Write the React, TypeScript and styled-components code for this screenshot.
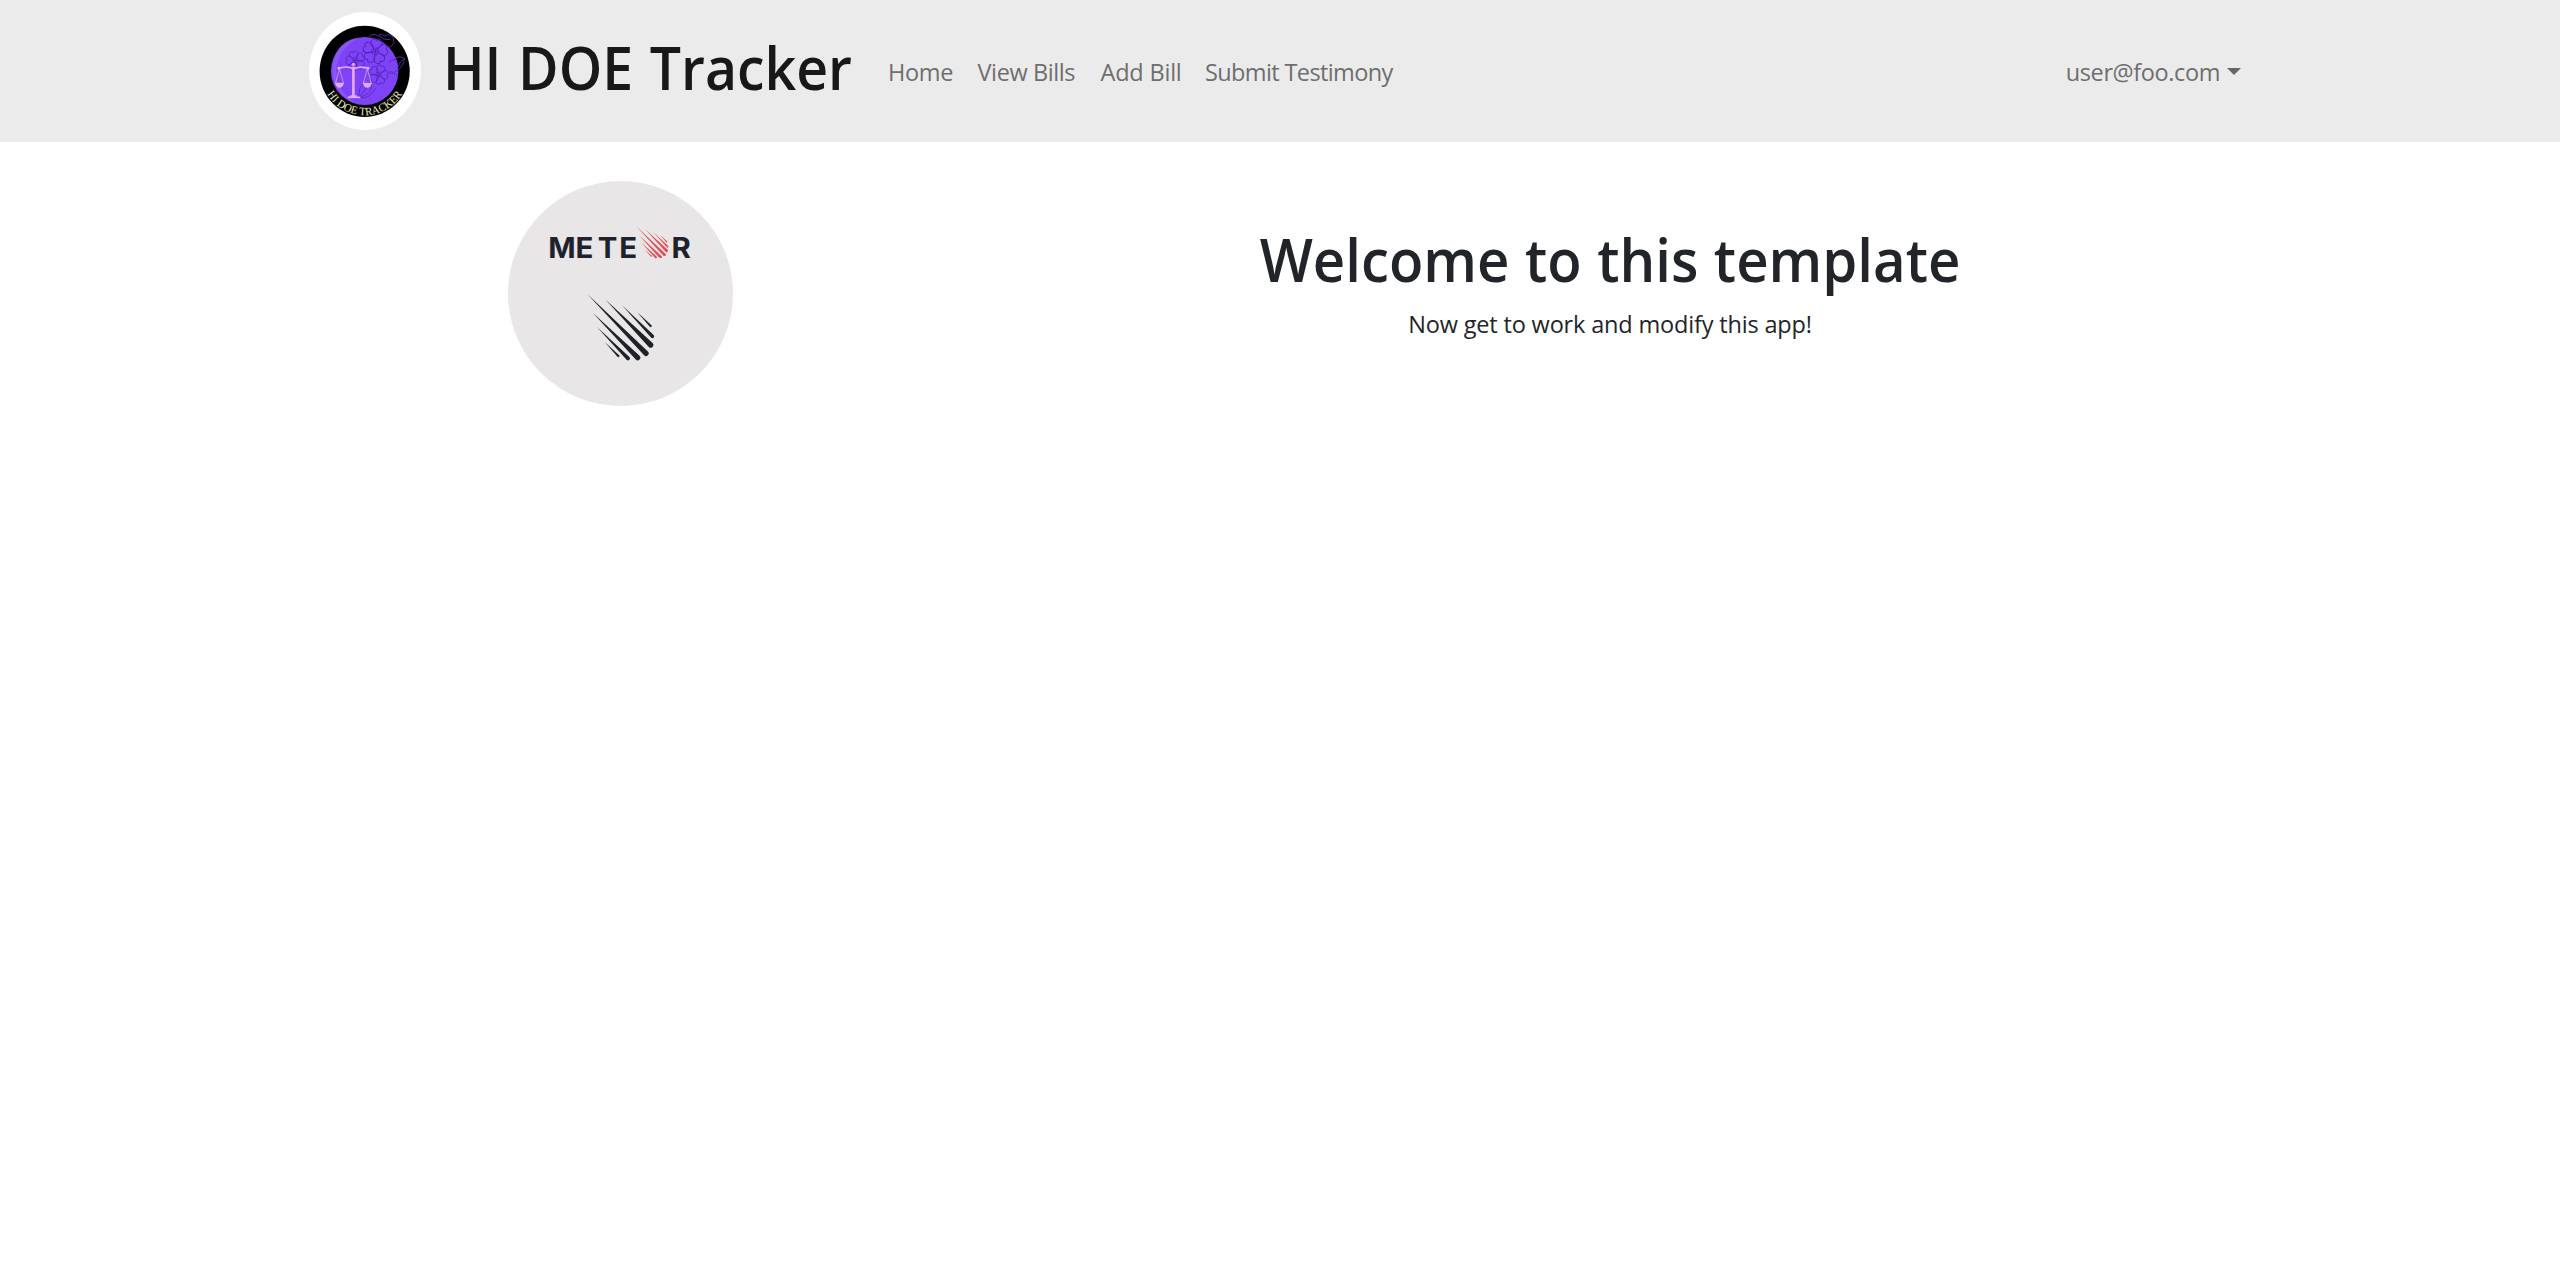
import React from "react";
import styled, { createGlobalStyle } from "styled-components";

const GlobalStyle = createGlobalStyle`
  * { box-sizing: border-box; }
  body {
    margin: 0;
    background: #fff;
    color: #212529;
    font-family: "Open Sans", "Noto Sans", sans-serif;
    font-size: 23.5px;
    line-height: 36px;
  }
`;

const NavBar = styled.header`
  height: 142px;
  background: #ebebeb;
`;

const Container = styled.div`
  width: 1980px;
  margin: 0 auto;
  padding: 0 18px;
`;

const NavInner = styled(Container)`
  height: 100%;
  display: flex;
  align-items: center;
`;

const Brand = styled.a`
  display: flex;
  align-items: center;
  gap: 22px;
  padding-left: 1px;
  color: #181818;
  text-decoration: none;
`;

const BrandLogo = styled.svg`
  flex: none;
  width: 112px;
  height: 118px;
  display: block;
`;

const BrandTitle = styled.h1`
  width: 433px;
  margin: 0;
  padding-bottom: 8px;
  font-size: 59px;
  font-weight: 600;
  line-height: 72px;
  word-spacing: 2.4px;
  white-space: nowrap;
  transform: scaleX(0.938);
  transform-origin: left;
`;

const NavLinks = styled.nav`
  display: flex;
  flex: 1;
`;

const NavLink = styled.a<{ $width: number; $spacing: number }>`
  width: ${(p) => p.$width + 24}px;
  padding: 1px 12px 0;
  color: #6e6e6e;
  letter-spacing: ${(p) => p.$spacing}px;
  text-decoration: none;
  white-space: nowrap;
`;

const UserMenu = styled.button`
  display: flex;
  align-items: center;
  gap: 7px;
  padding: 1px 11px 0 0;
  border: 0;
  background: none;
  color: #6e6e6e;
  font: inherit;
  letter-spacing: -0.4px;
`;

const Caret = styled.span`
  border: 7px solid transparent;
  border-top: 7.5px solid #666;
  border-bottom: 0;
`;

const Hero = styled(Container)`
  display: grid;
  grid-template-columns: 1fr 2fr;
  padding: 39px 0 0;
`;

const LogoColumn = styled.div`
  display: flex;
  justify-content: center;
`;

const MeteorLogo = styled.svg`
  width: 225px;
  height: 225px;
  display: block;
`;

const Copy = styled.div`
  padding-top: 42px;
  text-align: center;
`;

const Heading = styled.h1`
  margin: 0 0 11px;
  font-size: 59px;
  font-weight: 600;
  line-height: 72px;
  word-spacing: 1px;
  transform: scaleX(0.954);
`;

const Lead = styled.p`
  margin: 0;
  letter-spacing: -0.17px;
`;

const links = [
  { label: "Home", width: 65.5, spacing: -0.35 },
  { label: "View Bills", width: 99, spacing: -0.4 },
  { label: "Add Bill", width: 80.5, spacing: -0.2 },
  { label: "Submit Testimony", width: 190, spacing: -0.62 },
];

// tail x, tail y, head x, head y, head radius
const streaks = [
  [262, 371, 438, 549, 8],
  [317, 388, 452, 524, 8],
  [366, 405, 457, 498, 5.5],
  [412, 426, 452, 467, 3.5],
  [278, 427, 413, 562, 8],
  [291, 470, 384, 564, 6],
  [314, 515, 355, 557, 3.5],
];

function Meteor({ color, thin = 1 }: { color: string; thin?: number }) {
  return (
    <g fill={color}>
      {streaks.map(([x1, y1, x2, y2, radius]) => {
        const r = radius * thin;
        const len = Math.hypot(x2 - x1, y2 - y1);
        const nx = (-(y2 - y1) / len) * r;
        const ny = ((x2 - x1) / len) * r;
        return (
          <path
            key={x1}
            d={`M${x1} ${y1}L${x2 + nx} ${y2 + ny}A${r} ${r} 0 0 0 ${x2 - nx} ${y2 - ny}Z`}
          />
        );
      })}
    </g>
  );
}

const PETAL = "M-2 -5C-14 -12 -16 -23 -8 -28Q-3 -31 0 -25Q4 -32 10 -27C16 -20 11 -11 2 -5";

function Flower({ x, y, size, turn }: { x: number; y: number; size: number; turn: number }) {
  return (
    <g transform={`translate(${x} ${y}) rotate(${turn}) scale(${size})`}>
      {[0, 72, 144, 216, 288].map((a) => (
        <g key={a} transform={`rotate(${a})`}>
          <path d={PETAL} />
          <path d="M0 0L1 -10" />
        </g>
      ))}
    </g>
  );
}

function TrackerLogo() {
  return (
    <BrandLogo viewBox="26 36 338 354" preserveAspectRatio="none" role="img">
      <defs>
        <path id="motto" d="M81 282A132 132 0 0 0 309 279" />
      </defs>
      <ellipse cx="195" cy="213" rx="169" ry="177" fill="#fff" />
      <ellipse cx="194" cy="214" rx="136" ry="137" fill="#000" />
      <circle cx="194" cy="213" r="102" fill="#7d43f5" />
      <path d="M100 235C88 165 122 118 178 113C140 132 112 160 108 214C108 258 136 294 171 309C133 301 108 272 100 235Z" fill="#925ff8" opacity=".65" />
      <g fill="none" stroke="#5022b5" strokeWidth="2.1">
        <Flower x={226} y={154} size={1.3} turn={8} />
        <Flower x={166} y={182} size={1} turn={-15} />
        <Flower x={236} y={224} size={1} turn={20} />
        <path d="M177 292C175 261 186 247 211 248C220 267 208 285 177 292ZM177 292L211 248M177 292Q204 302 228 264M266 188Q280 174 294 181M266 220Q287 216 294 231" />
      </g>
      <g fill="none" stroke="#6532bd" strokeWidth="2.4">
        <path d="M207 111Q217 98 233 107Q245 98 253 107Q276 98 281 117Q287 129 276 136Q270 146 257 137M237 108Q252 122 272 119M285 174Q302 166 314 175Q312 199 290 214M290 214Q298 185 314 175M290 214Q279 221 270 214" />
      </g>
      <g fill="none" stroke="#e3a9fa" strokeWidth="3.5">
        <path d="M113 207Q139 195 160 207Q183 196 208 207" strokeWidth="5" />
        <path d="M160 200V291" strokeWidth="8" />
        <path d="M143 292H181" strokeWidth="5" />
        <path d="M118 207L106 249M118 207L130 249M202 207L190 249M202 207L214 249" strokeWidth="2.2" />
      </g>
      <g fill="#e3a9fa">
        <circle cx="160" cy="193" r="5" />
        <circle cx="116" cy="204" r="4" />
        <circle cx="204" cy="204" r="4" />
        <path d="M104 248H132Q128 263 118 263Q108 263 104 248ZM188 248H216Q212 263 202 263Q192 263 188 248ZM151 286H169L173 292H147Z" />
      </g>
      <text fill="#eee9b4" fontFamily="'Liberation Serif', serif" fontSize="34">
        <textPath href="#motto" textLength="272" lengthAdjust="spacingAndGlyphs">HI DOE TRACKER</textPath>
      </text>
    </BrandLogo>
  );
}

export default function App() {
  return (
    <>
      <GlobalStyle />
      <NavBar>
        <NavInner>
          <Brand>
            <TrackerLogo />
            <BrandTitle>HI DOE Tracker</BrandTitle>
          </Brand>
          <NavLinks>
            {links.map((l) => (
              <NavLink key={l.label} $width={l.width} $spacing={l.spacing}>
                {l.label}
              </NavLink>
            ))}
          </NavLinks>
          <UserMenu>
            user@foo.com
            <Caret />
          </UserMenu>
        </NavInner>
      </NavBar>
      <Hero as="main">
        <LogoColumn>
          <MeteorLogo viewBox="24 32 675 675" role="img">
            <circle cx="361.5" cy="369.5" r="337.5" fill="#e8e6e7" />
            <text
              transform="scale(1.05 1)"
              x="138 216 279 341 490"
              y="264"
              fill="#20222b"
              fontFamily="Inter, sans-serif"
              fontSize="84"
              fontWeight="700"
            >
              METER
            </text>
            <g transform="translate(284 -9) scale(0.478)">
              <Meteor color="#dc4f57" thin={1.1} />
            </g>
            <Meteor color="#202228" />
          </MeteorLogo>
        </LogoColumn>
        <Copy>
          <Heading>Welcome to this template</Heading>
          <Lead>Now get to work and modify this app!</Lead>
        </Copy>
      </Hero>
    </>
  );
}
